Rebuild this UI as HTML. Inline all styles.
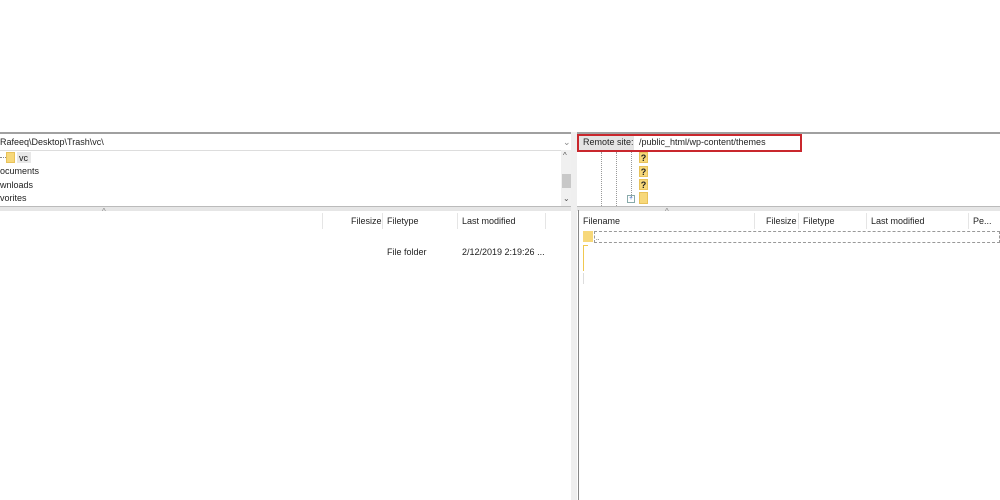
<!DOCTYPE html>
<html><head><style>
body{margin:0;width:1000px;height:500px;background:#fff;position:relative;overflow:hidden;font-family:"Liberation Sans",sans-serif;font-size:9px;color:#222}
.a{position:absolute}
.f{background:#f7d87a;border:1px solid #e8c25a;box-sizing:border-box}
</style></head><body>
<div class="a" style="left:0;top:132px;width:571px;height:2px;background:#a0a0a0"></div>
<div class="a" style="left:577px;top:132px;width:423px;height:2px;background:#a0a0a0"></div>
<div class="a" style="left:0;top:134px;width:571px;height:16px;border-bottom:1px solid #ddd"></div>
<div class="a" style="left:0;top:137px">Rafeeq\Desktop\Trash\vc\</div>
<div class="a" style="left:563px;top:137px;color:#888">&#8964;</div>
<div class="a" style="left:0;top:157px;width:6px;border-top:1px dotted #888"></div>
<div class="a f" style="left:6px;top:152px;width:9px;height:11px"></div>
<div class="a" style="left:17px;top:152px;width:14px;height:11px;background:#e8e8e8"></div>
<div class="a" style="left:19px;top:153px">vc</div>
<div class="a" style="left:0;top:166px">ocuments</div>
<div class="a" style="left:0;top:180px">wnloads</div>
<div class="a" style="left:0;top:193px">vorites</div>
<div class="a" style="left:561px;top:150px;width:12px;height:56px;background:#f0f0f0"></div>
<div class="a" style="left:562px;top:174px;width:10px;height:14px;background:#c8c8c8"></div>
<div class="a" style="left:563px;top:151px;color:#555;font-size:8px">^</div>
<div class="a" style="left:563px;top:194px;color:#555;font-size:8px">&#8964;</div>
<div class="a" style="left:0;top:206px;width:571px;height:4px;background:#e6e6e6;border-top:1px solid #bbb"></div>
<div class="a" style="left:577px;top:206px;width:423px;height:4px;background:#e6e6e6;border-top:1px solid #bbb"></div>
<div class="a" style="left:571px;top:132px;width:6px;height:368px;background:#efefef"></div>
<div class="a" style="left:102px;top:207px;font-size:8px;color:#888">^</div>
<div class="a" style="left:322px;top:213px;width:1px;height:16px;background:#e5e5e5"></div>
<div class="a" style="left:382px;top:213px;width:1px;height:16px;background:#e5e5e5"></div>
<div class="a" style="left:457px;top:213px;width:1px;height:16px;background:#e5e5e5"></div>
<div class="a" style="left:545px;top:213px;width:1px;height:16px;background:#e5e5e5"></div>
<div class="a" style="left:351px;top:216px">Filesize</div>
<div class="a" style="left:387px;top:216px">Filetype</div>
<div class="a" style="left:462px;top:216px">Last modified</div>
<div class="a" style="left:387px;top:247px">File folder</div>
<div class="a" style="left:462px;top:247px">2/12/2019 2:19:26 ...</div>
<div class="a" style="left:579px;top:136px;width:55px;height:14px;background:#e4e4e4"></div>
<div class="a" style="left:583px;top:137px">Remote site:</div>
<div class="a" style="left:639px;top:137px">/public_html/wp-content/themes</div>
<div class="a" style="left:577px;top:134px;width:225px;height:18px;border:2px solid #c9272d;box-sizing:border-box"></div>
<div class="a" style="left:601px;top:152px;height:54px;border-left:1px dotted #999"></div>
<div class="a" style="left:616px;top:152px;height:54px;border-left:1px dotted #999"></div>
<div class="a" style="left:631px;top:152px;height:45px;border-left:1px dotted #999"></div>
<div class="a f" style="left:639px;top:152px;width:9px;height:11px;font-weight:bold;font-size:9px;line-height:10px;text-align:center">?</div>
<div class="a f" style="left:639px;top:166px;width:9px;height:11px;font-weight:bold;font-size:9px;line-height:10px;text-align:center">?</div>
<div class="a f" style="left:639px;top:179px;width:9px;height:11px;font-weight:bold;font-size:9px;line-height:10px;text-align:center">?</div>
<div class="a f" style="left:639px;top:192px;width:9px;height:12px"></div>
<div class="a" style="left:627px;top:195px;width:6px;height:6px;border:1px solid #8aa;font-size:6px;line-height:6px;text-align:center;color:#36c">+</div>
<div class="a" style="left:578px;top:210px;width:1px;height:290px;background:#888"></div>
<div class="a" style="left:665px;top:207px;font-size:8px;color:#888">^</div>
<div class="a" style="left:754px;top:213px;width:1px;height:16px;background:#e5e5e5"></div>
<div class="a" style="left:798px;top:213px;width:1px;height:16px;background:#e5e5e5"></div>
<div class="a" style="left:866px;top:213px;width:1px;height:16px;background:#e5e5e5"></div>
<div class="a" style="left:968px;top:213px;width:1px;height:16px;background:#e5e5e5"></div>
<div class="a" style="left:583px;top:216px">Filename</div>
<div class="a" style="left:766px;top:216px">Filesize</div>
<div class="a" style="left:803px;top:216px">Filetype</div>
<div class="a" style="left:871px;top:216px">Last modified</div>
<div class="a" style="left:973px;top:216px">Pe...</div>
<div class="a" style="left:583px;top:231px;width:10px;height:11px;background:#f7d87a"></div>
<div class="a" style="left:594px;top:231px;width:406px;height:12px;border:1px dashed #999;box-sizing:border-box"></div>
<div class="a" style="left:596px;top:236px;font-size:6px">..</div>
<div class="a" style="left:583px;top:245px;width:1px;height:26px;background:#f0c850"></div>
<div class="a" style="left:583px;top:245px;width:5px;height:1px;background:#f0c850"></div>
<div class="a" style="left:583px;top:273px;width:1px;height:11px;background:#ddd"></div>
</body></html>
